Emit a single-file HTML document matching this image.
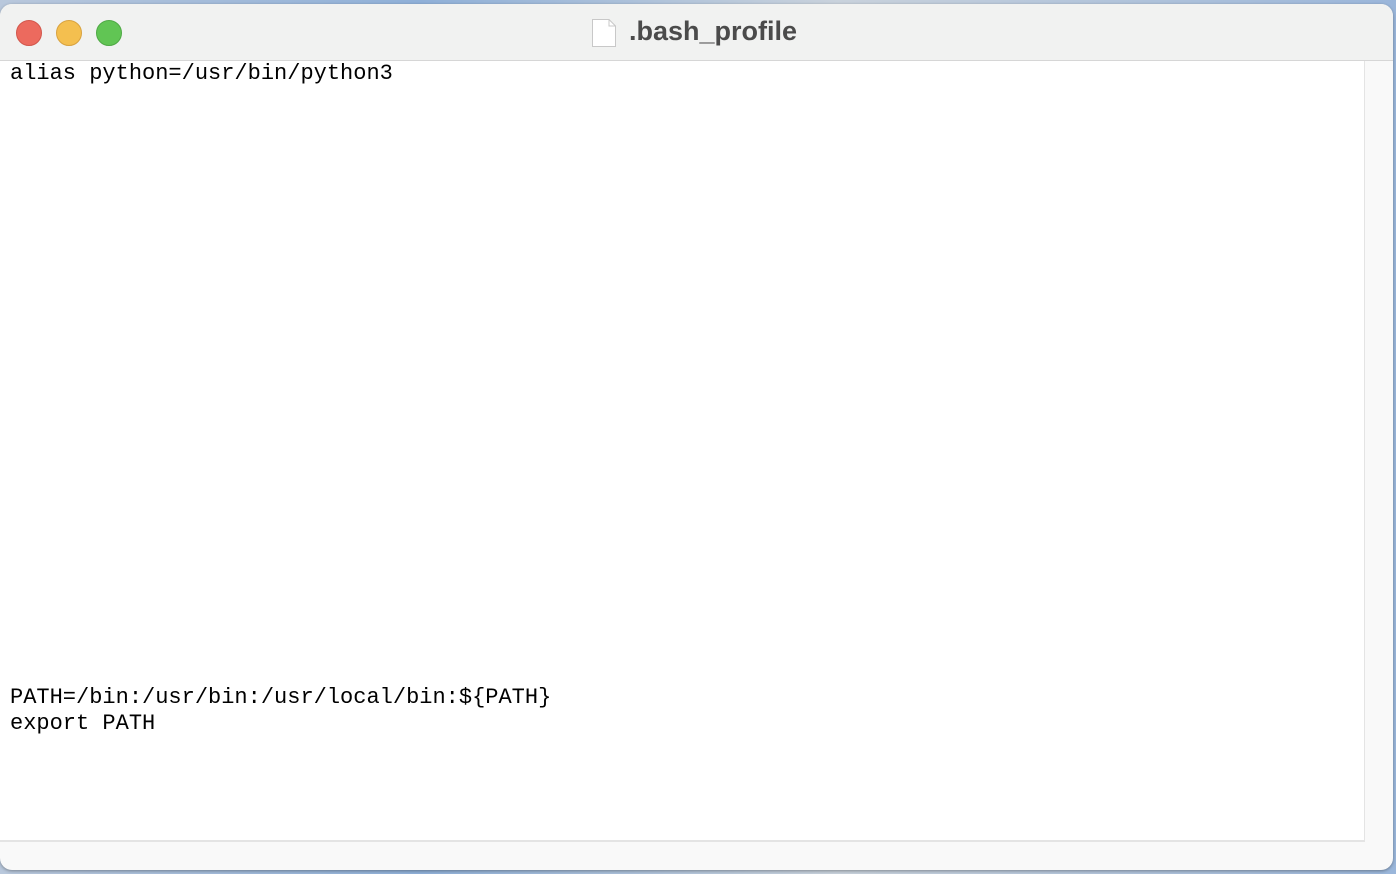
<!DOCTYPE html>
<html><head><style>
html,body{margin:0;padding:0;width:1396px;height:874px;overflow:hidden;background:linear-gradient(90deg,#b9c8dc,#8fb0d8 30%,#c9d2dc 60%,#9ab6da);}
.win{position:absolute;left:0;top:4px;width:1393px;height:866px;background:#f9f9f9;border-radius:12px;overflow:hidden;box-shadow:0 1px 3px rgba(0,0,0,.35);}
.tb{position:absolute;left:0;top:0;right:0;height:56px;background:#f1f2f1;border-bottom:1px solid #d6d6d6;}
.dot{position:absolute;top:16px;width:24px;height:24px;border-radius:50%;}
.title{position:absolute;left:629px;top:12px;font:bold 27px "Liberation Sans",sans-serif;color:#4b4b4b;}
.content{position:absolute;left:0;top:57px;width:1364px;height:779px;background:#fff;border-right:1px solid #e4e4e4;border-bottom:2px solid #e4e4e4;}
pre{margin:0;position:absolute;left:10px;top:0px;font:22px/26px "Liberation Mono",monospace;color:#000;}
</style></head><body>
<div class="win">
<div class="tb">
<div class="dot" style="left:16px;background:#ec6a5e;border:0.5px solid #d2574c"></div>
<div class="dot" style="left:56px;background:#f4bf4f;border:0.5px solid #d8a23f"></div>
<div class="dot" style="left:96px;background:#61c554;border:0.5px solid #4fa945"></div>
<svg style="position:absolute;left:591px;top:14px" width="26" height="30" viewBox="0 0 26 30"><path d="M1.5 1.5H18L24.5 8V28.5H1.5Z" fill="#fff" stroke="#c8c8c8"/><path d="M18 1.5V8H24.5" fill="none" stroke="#c8c8c8"/></svg>
<div class="title">.bash_profile</div>
</div>
<div class="content"><pre>alias python=/usr/bin/python3























PATH=/bin:/usr/bin:/usr/local/bin:${PATH}
export PATH</pre></div>
</div>
</body></html>
